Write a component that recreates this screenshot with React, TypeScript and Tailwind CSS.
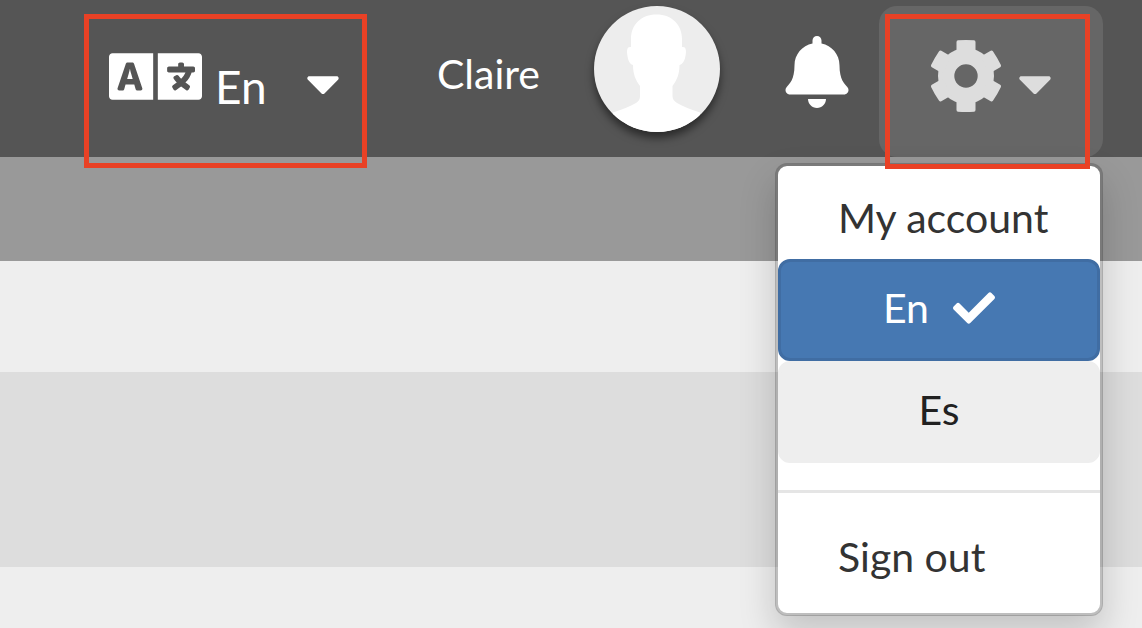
import React, { useState } from 'react';
import { FaBell, FaCaretDown, FaCheck, FaLanguage } from 'react-icons/fa';

type Locale = 'En' | 'Es';

const Avatar: React.FC = () => (
  <svg
    viewBox="0 0 126 126"
    role="img"
    aria-label="Claire"
    className="w-[126px] h-[126px] rounded-full bg-[#ededed] shadow-[0_6px_9px_rgba(0,0,0,0.5)]"
  >
    <path
      fill="#fff"
      d="M62.5 8.500C47 8.500 37 19 37 33V41c-3-.5-4 1.500-4 5 .5 7 2 12 6 13 0 9 2.500 15 7 21V90c0 3-1 5-4 7-6 3.500-14 6.500-23 9.500V126h87v-19.500c-9-3-17-6-23-9.500-3-2-4.500-4-4.500-7V80c4.500-6 7-12 7-21 4-1 6-6 6.500-13 0-3.500-1-5.500-4-5V33C88 19 78 8.500 62.500 8.500z"
    />
  </svg>
);

const CogIcon: React.FC<{ className: string }> = ({ className }) => (
  <svg viewBox="-36 -36 72 72" fill="currentColor" className={className} aria-hidden="true">
    <path
      fillRule="evenodd"
      d="M-28 0a28 28 0 1 0 56 0a28 28 0 1 0-56 0zM-11.700 0a11.700 11.700 0 1 1 23.400 0a11.700 11.700 0 1 1-23.400 0z"
    />
    {[0, 60, 120, 180, 240, 300].map((angle) => (
      <path
        key={angle}
        transform={`rotate(${angle})`}
        d="M-9.500-22V-34q0-1.500 1.500-1.700Q0-36.300 8-35.700q1.500.2 1.500 1.700V-22z"
      />
    ))}
  </svg>
);

// Red outline drawn over a part of the menu bar
const Highlight: React.FC<{ className: string }> = ({ className }) => (
  <div className={`absolute z-20 border-5 border-[#e94125] pointer-events-none ${className}`}></div>
);

interface SettingsMenuProps {
  locale: Locale;
  onChange: (locale: Locale) => void;
}

const SettingsMenu: React.FC<SettingsMenuProps> = ({ locale, onChange }) => {
  const optionClass = (value: Locale) =>
    locale === value
      ? 'bg-[#4678b2] text-white border-[#406da3]'
      : 'bg-[#eeeeee] text-[#212121] border-[#eeeeee]';

  return (
    <div className="absolute right-0 top-[157px] z-10 w-[328px] bg-white bg-clip-padding border-3 border-black/20 rounded-xl shadow-[0_18px_36px_rgba(0,0,0,0.18)] text-[41px] leading-[60px] text-[#333333]">
      <a href="#account" className="block pl-15 pt-[22px] pb-[11px]">
        My account
      </a>
      {(['En', 'Es'] as Locale[]).map((value) => (
        <button
          key={value}
          onClick={() => onChange(value)}
          className={`w-full h-[102px] pb-1 flex items-center justify-center gap-6 border-3 rounded-xl ${optionClass(value)}`}
        >
          {value}
          {locale === value && <FaCheck className="w-[42px] h-[42px]" />}
        </button>
      ))}
      <hr className="mt-[27px] border-t-3 border-[#e5e5e5]" />
      <a href="#signout" className="block pl-15 pt-[34px] pb-[26px]">
        Sign out
      </a>
    </div>
  );
};

const App: React.FC = () => {
  const [locale, setLocale] = useState<Locale>('En');
  const [open, setOpen] = useState(true);

  return (
    <div className="min-h-screen flex flex-col overflow-hidden bg-[#eeeeee] font-['Lato','Open_Sans',sans-serif]">
      <header className="relative h-[157px] shrink-0 pt-1.5 pr-[39px] flex items-start justify-end bg-[#555555] text-white">
        <div className="relative mr-[70px]">
          <button className="w-[283px] h-[140px] pl-[25px] pr-[27px] flex items-center">
            <FaLanguage className="w-[93px] h-[93px]" />
            <span className="ml-[13px] mt-[22px] text-[46px] leading-[60px]">En</span>
            <FaCaretDown className="ml-auto mt-[14px] w-[34px] h-[54px]" />
          </button>
          <Highlight className="inset-x-0 top-2 h-[154px]" />
        </div>

        <span className="pt-[38px] text-[41px] leading-[60px]">Claire</span>
        <div className="ml-[54px]">
          <Avatar />
        </div>
        <button aria-label="Notifications" className="ml-[65px] mt-[30px]">
          <FaBell className="w-[64px] h-[72px]" />
        </button>

        <div className="relative ml-[30px]">
          <button
            aria-label="Settings"
            aria-expanded={open}
            onClick={() => setOpen(!open)}
            className="w-[224px] h-[151px] pb-[11px] flex items-center justify-center gap-4 rounded-[18px] bg-[#666666] text-[#dddddd]"
          >
            <CogIcon className="w-[72px] h-[72px]" />
            <FaCaretDown className="mt-[14px] w-[34px] h-[54px]" />
          </button>
          {open && <SettingsMenu locale={locale} onChange={setLocale} />}
          <Highlight className="left-1.5 right-[13px] top-2 h-[155px]" />
        </div>
      </header>

      <main className="flex-1 flex flex-col">
        <div className="h-[104px] bg-[#999999]"></div>
        <div className="h-[111px]"></div>
        <div className="h-[195px] bg-[#dddddd]"></div>
        <div className="flex-1"></div>
      </main>
    </div>
  );
};

export default App;
